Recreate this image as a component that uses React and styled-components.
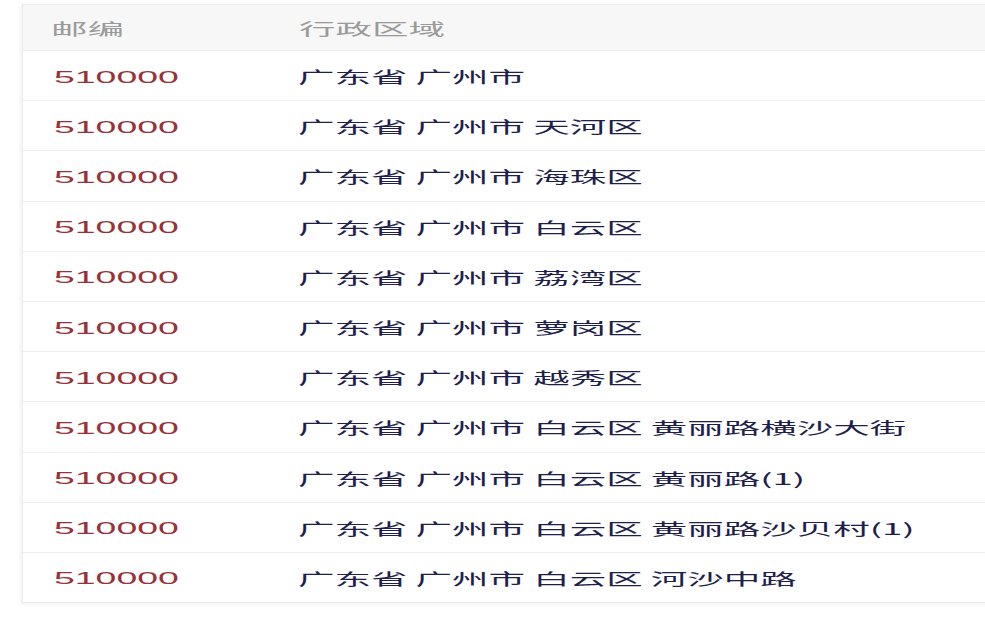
import React from 'react';
import styled, { createGlobalStyle } from 'styled-components';

const GlobalStyle = createGlobalStyle`
  html, body {
    margin: 0;
    padding: 0;
    background: #ffffff;
  }
  body {
    font-family: "Liberation Sans", "Noto Sans CJK SC", sans-serif;
  }
`;

const Page = styled.div`
  width: 985px;
  height: 617px;
  overflow: hidden;
  padding: 4px 0 0 22px;
  box-sizing: border-box;
`;

const Table = styled.div`
  width: 1000px;
  border-left: 1px solid #ececec;
  border-top: 1px solid #ececec;
  box-shadow: -1px 1px 4px rgba(0, 0, 0, 0.07);
`;

const Row = styled.div`
  display: grid;
  grid-template-columns: 250px 1fr;
  align-items: center;
  height: ${p => (p.$head ? '46px' : '50.2px')};
  box-sizing: border-box;
  background: ${p => (p.$head ? '#f7f7f7' : '#ffffff')};
  border-bottom: 1px solid #efefef;
`;

const Cell = styled.div`
  padding: 4px 0 0 ${p => p.$pad}px;
  white-space: nowrap;
`;

// the picture is stretched wide, so the glyphs are widened the same way
const Text = styled.span`
  display: inline-block;
  transform: scaleX(${p => p.$stretch});
  transform-origin: left center;
  font-size: ${p => p.$size}px;
  color: ${p => p.$color};
  font-family: ${p => (p.$cjk
    ? '"Noto Sans CJK SC", "Liberation Sans", sans-serif'
    : '"Liberation Sans", "Noto Sans CJK SC", sans-serif')};
  line-height: 1;
`;

const Label = props => <Text $cjk $size={16} $stretch={2.28} {...props} />;
const Code = props => <Text $size={17} $stretch={2.2} {...props} />;

const rows = [
  '广东省 广州市',
  '广东省 广州市 天河区',
  '广东省 广州市 海珠区',
  '广东省 广州市 白云区',
  '广东省 广州市 荔湾区',
  '广东省 广州市 萝岗区',
  '广东省 广州市 越秀区',
  '广东省 广州市 白云区 黄丽路横沙大街',
  '广东省 广州市 白云区 黄丽路(1)',
  '广东省 广州市 白云区 黄丽路沙贝村(1)',
  '广东省 广州市 白云区 河沙中路',
];

export default function App() {
  return (
    <Page>
      <GlobalStyle />
      <Table>
        <Row $head>
          <Cell $pad={28}><Label $color="#9a9a9a">邮编</Label></Cell>
          <Cell $pad={26}><Label $color="#9a9a9a">行政区域</Label></Cell>
        </Row>
        {rows.map((r, i) => (
          <Row key={i}>
            <Cell $pad={31}><Code $color="#983238">510000</Code></Cell>
            <Cell $pad={25}><Label $color="#1f1f4d">{r}</Label></Cell>
          </Row>
        ))}
      </Table>
    </Page>
  );
}
